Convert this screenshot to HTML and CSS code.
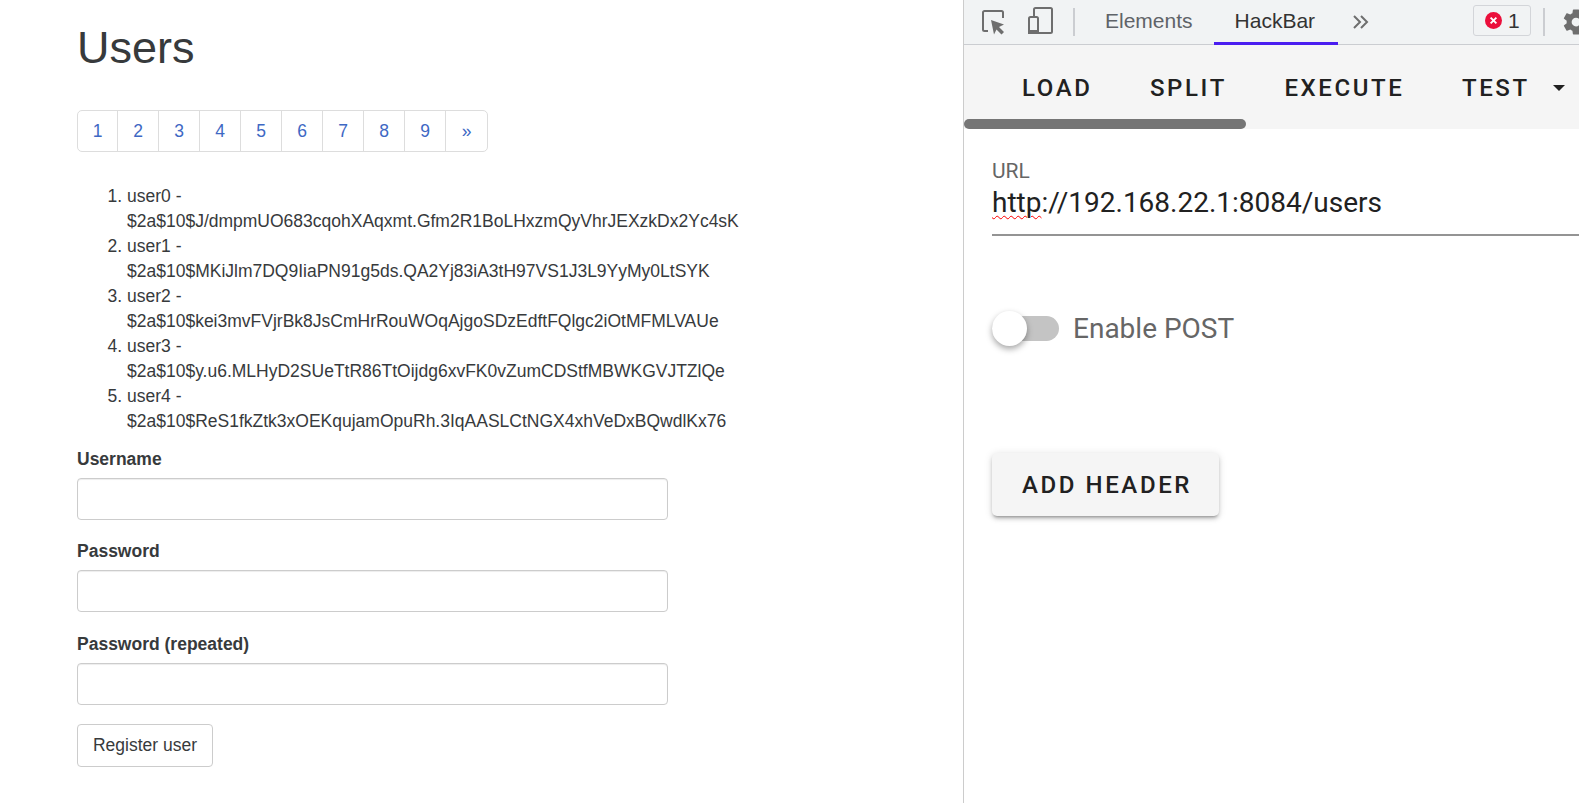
FILE: index.html
```html
<!DOCTYPE html>
<html lang="en">
<head>
  <meta charset="UTF-8" />
  <title>Users</title>
  <link rel="stylesheet" href="styles.css">
</head>
<body>
  <main class="page">
    <h1>Users</h1>

    <ul class="pagination">
      <li><a href="#">1</a></li>
      <li><a href="#">2</a></li>
      <li><a href="#">3</a></li>
      <li><a href="#">4</a></li>
      <li><a href="#">5</a></li>
      <li><a href="#">6</a></li>
      <li><a href="#">7</a></li>
      <li><a href="#">8</a></li>
      <li><a href="#">9</a></li>
      <li><a href="#">»</a></li>
    </ul>

    <ol class="users">
      <li>user0 - $2a$10$J/dmpmUO683cqohXAqxmt.Gfm2R1BoLHxzmQyVhrJEXzkDx2Yc4sK</li>
      <li>user1 - $2a$10$MKiJlm7DQ9IiaPN91g5ds.QA2Yj83iA3tH97VS1J3L9YyMy0LtSYK</li>
      <li>user2 - $2a$10$kei3mvFVjrBk8JsCmHrRouWOqAjgoSDzEdftFQlgc2iOtMFMLVAUe</li>
      <li>user3 - $2a$10$y.u6.MLHyD2SUeTtR86TtOijdg6xvFK0vZumCDStfMBWKGVJTZlQe</li>
      <li>user4 - $2a$10$ReS1fkZtk3xOEKqujamOpuRh.3IqAASLCtNGX4xhVeDxBQwdlKx76</li>
    </ol>

    <form class="register">
      <div class="field">
        <label for="username">Username</label>
        <input id="username" type="text">
      </div>
      <div class="field">
        <label for="password">Password</label>
        <input id="password" type="password">
      </div>
      <div class="field">
        <label for="repeated">Password (repeated)</label>
        <input id="repeated" type="password">
      </div>
      <button type="button" class="btn">Register user</button>
    </form>
  </main>

  <aside class="devtools">
    <div class="toolbar">
      <div class="tool-icons">
        <svg class="icon" width="28" height="28" viewBox="0 0 28 28" fill="none">
          <path d="M9 23H5.500A1.500 1.500 0 0 1 4 21.500V4.500A1.500 1.500 0 0 1 5.500 3H22.500A1.500 1.500 0 0 1 24 4.500V10" stroke="#6e6e6e" stroke-width="2"/>
          <path d="M12 12l13 4.500-5 2.500 5 5-2.500 2.500-5-5-2.500 5z" fill="#6e6e6e"/>
        </svg>
        <svg class="icon" width="28" height="30" viewBox="0 0 28 30" fill="none">
          <path d="M9 9V2.500A1.500 1.500 0 0 1 10.500 1H25.500A1.500 1.500 0 0 1 27 2.500V24.500A1.500 1.500 0 0 1 25.500 26H14" stroke="#6e6e6e" stroke-width="2"/>
          <rect x="4" y="10" width="9" height="16" rx="1.500" stroke="#6e6e6e" stroke-width="2"/>
          <rect x="3" y="23" width="11" height="4" fill="#6e6e6e"/>
        </svg>
      </div>
      <span class="divider"></span>
      <a class="tab first" href="#">Elements</a>
      <a class="tab active" href="#">HackBar</a>
      <svg class="more" width="18" height="16" viewBox="0 0 18 16" fill="none">
        <path d="M2 2l6 6-6 6M9 2l6 6-6 6" stroke="#6e6e6e" stroke-width="2"/>
      </svg>
      <div class="toolbar-right">
        <div class="errors">
          <svg width="17" height="17" viewBox="0 0 16 16">
            <circle cx="8" cy="8" r="8" fill="#eb0f3b"/>
            <path d="M5.300 5.300l5.400 5.400M10.700 5.300l-5.400 5.400" stroke="#fff" stroke-width="1.800"/>
          </svg>
          <span>1</span>
        </div>
        <span class="divider"></span>
        <svg class="gear" width="30" height="30" viewBox="0 0 24 24">
          <path fill="#6e6e6e" d="M19.400 13c.04-.33.06-.66.06-1s-.02-.67-.06-1l2.100-1.650c.19-.15.24-.42.120-.64l-2-3.460c-.12-.22-.39-.3-.61-.22l-2.490 1c-.52-.4-1.080-.73-1.690-.98l-.38-2.650A.49.49 0 0 0 14 2h-4c-.25 0-.46.18-.49.42l-.38 2.650c-.61.25-1.170.59-1.690.98l-2.490-1c-.23-.09-.49 0-.61.22l-2 3.460c-.13.22-.07.49.12.64L4.570 11c-.04.33-.07.67-.07 1s.03.67.07 1l-2.110 1.650c-.19.15-.24.42-.12.64l2 3.460c.12.22.39.3.61.22l2.490-1c.52.4 1.080.73 1.690.98l.38 2.650c.03.24.24.42.49.42h4c.25 0 .46-.18.49-.42l.38-2.650c.61-.25 1.170-.59 1.690-.98l2.490 1c.23.09.49 0 .61-.22l2-3.460c.12-.22.07-.49-.12-.64L19.400 13zM12 15.500a3.500 3.500 0 1 1 0-7 3.500 3.500 0 0 1 0 7z"/>
        </svg>
      </div>
    </div>

    <div class="actions">
      <div class="action-row">
        <span class="action">LOAD</span>
        <span class="action">SPLIT</span>
        <span class="action">EXECUTE</span>
        <span class="action">TEST</span>
        <span class="caret"></span>
      </div>
      <div class="scrollbar"><div class="scroll-thumb"></div></div>
    </div>

    <div class="hackbar">
      <div class="url-field">
        <div class="url-label">URL</div>
        <div class="url-value"><span class="misspelled">http</span>://192.168.22.1:8084/users</div>
      </div>

      <div class="switch-row">
        <span class="switch"><span class="switch-thumb"></span></span>
        <span class="switch-label">Enable POST</span>
      </div>

      <button type="button" class="add-header">ADD HEADER</button>
    </div>
  </aside>
</body>
</html>
```

FILE: styles.css
```css
* {
  box-sizing: border-box;
}
html, body {
  height: 100%;
}
body {
  display: flex;
  margin: 0;
  overflow: hidden;
  background: #fff;
  color: #373a3c;
  font-family: "Liberation Sans", Arial, sans-serif;
  font-size: 17.5px;
  line-height: 25px;
}

/* left side, the users page */
.page {
  flex: 0 0 963px;
  padding: 21px 0 0 77px;
}
h1 {
  margin: 0 0 36px;
  font-size: 45px;
  font-weight: 400;
  line-height: 53px;
}
.pagination {
  display: flex;
  width: max-content;
  margin: 0 0 32px;
  padding: 0;
  list-style: none;
}
.pagination a {
  display: block;
  width: 42px;
  height: 42px;
  margin-left: -1px;
  border: 1px solid #ddd;
  color: #3e68c4;
  line-height: 40px;
  text-align: center;
  text-decoration: none;
}
.pagination li:first-child a {
  width: 41px;
  margin-left: 0;
  border-radius: 5px 0 0 5px;
}
.pagination li:last-child a {
  width: 43px;
  border-radius: 0 5px 5px 0;
}
.users {
  width: 591px;
  margin: 0 0 13px;
  padding-left: 50px;
}
.field {
  margin-bottom: 19.200px;
}
.field:nth-child(2) {
  margin-bottom: 20px;
}
.field:nth-child(3) {
  margin-bottom: 18.500px;
}
label {
  display: block;
  margin-bottom: 6px;
  font-weight: 700;
}
input {
  display: block;
  width: 591px;
  height: 42px;
  border: 1px solid #ccc;
  border-radius: 4px;
  background: #fff;
  box-shadow: inset 0 1px 1px rgba(0, 0, 0, 0.075);
}
.btn {
  width: 136px;
  height: 43px;
  padding: 0;
  border: 1px solid #ccc;
  border-radius: 4px;
  background: #fff;
  color: #373a3c;
  font: inherit;
}

/* right side, devtools with the hackbar panel */
.devtools {
  flex: 1;
  min-width: 0;
  overflow: hidden;
  border-left: 1px solid #ccc;
  font-family: Roboto, sans-serif;
}
.toolbar {
  display: flex;
  align-items: center;
  height: 45px;
  padding-left: 15px;
  border-bottom: 1px solid #cbcdd1;
  background: #f1f3f4;
  font-family: "Liberation Sans", Arial, sans-serif;
}
.tool-icons {
  display: flex;
  align-items: center;
  gap: 18px;
}
.icon {
  display: block;
}
.divider {
  flex: none;
  width: 2px;
  height: 28px;
  margin-left: 20px;
  background: #cbcdd1;
}
.tab {
  display: flex;
  align-items: center;
  height: 45px;
  padding: 0 21px 3px 22px;
  color: #5f6368;
  font-size: 21px;
  text-decoration: none;
}
.tab.first {
  margin-left: 8px;
}
.tab.active {
  padding: 0 23px 0 21px;
  border-bottom: 3px solid #4a1df0;
  color: #333;
}
.more {
  flex: none;
  margin-left: 14px;
}
.toolbar-right {
  display: flex;
  align-items: center;
  margin-left: auto;
  margin-right: -11.500px;
}
.errors {
  display: flex;
  align-items: center;
  gap: 6px;
  width: 58px;
  height: 31px;
  margin-top: -3px;
  padding-left: 11px;
  border: 1px solid #d3d5d9;
  border-radius: 3px;
  color: #333;
  font-size: 21px;
}
.toolbar-right .divider {
  margin: 0 15.500px 0 12px;
}
.gear {
  flex: none;
}
.actions {
  height: 84px;
  background: #f5f5f5;
}
.action-row {
  display: flex;
  align-items: center;
  height: 74px;
  padding: 12px 0 0 56px;
  gap: 53.500px;
  white-space: nowrap;
}
.action {
  padding: 0 2px;
  color: #212121;
  font-size: 24px;
  font-weight: 500;
  letter-spacing: 2.600px;
}
.caret {
  flex: none;
  width: 0;
  height: 0;
  margin-left: -32px;
  border-style: solid;
  border-width: 6px 6px 0;
  border-color: #212121 transparent transparent;
}
.scrollbar {
  height: 10px;
}
.scroll-thumb {
  width: 282px;
  height: 10px;
  border-radius: 5px;
  background: #757575;
}
.hackbar {
  padding: 29px 0 0 28px;
}
.url-field {
  height: 78px;
  border-bottom: 2px solid #949494;
}
.url-label {
  color: #666;
  font-size: 21px;
  line-height: 27px;
}
.url-value {
  color: #212121;
  font-size: 28px;
  line-height: 36px;
}
.misspelled {
  text-decoration: underline wavy #f00;
  text-decoration-thickness: 1.200px;
  text-underline-offset: 3px;
}
.switch-row {
  display: flex;
  align-items: center;
  margin-top: 75px;
}
.switch {
  position: relative;
  width: 67px;
  height: 25px;
  border-radius: 13px;
  background: #c4c4c4;
}
.switch-thumb {
  position: absolute;
  left: 0;
  top: -5px;
  width: 35px;
  height: 35px;
  border-radius: 50%;
  background: #fff;
  box-shadow: 0 3px 6px rgba(0, 0, 0, 0.35);
}
.switch-label {
  margin-left: 14px;
  color: #666;
  font-size: 28px;
  line-height: 35px;
}
.add-header {
  display: block;
  width: 227px;
  height: 63px;
  margin-top: 107px;
  padding: 0 0 0 3px;
  border: none;
  border-radius: 5px;
  background: #f5f5f5;
  box-shadow: 0 3px 3px -2px rgba(0, 0, 0, 0.3), 0 3px 4px rgba(0, 0, 0, 0.14), 0 1px 8px rgba(0, 0, 0, 0.12);
  color: #212121;
  font-family: Roboto, sans-serif;
  font-size: 24px;
  font-weight: 500;
  letter-spacing: 2.600px;
}
```
